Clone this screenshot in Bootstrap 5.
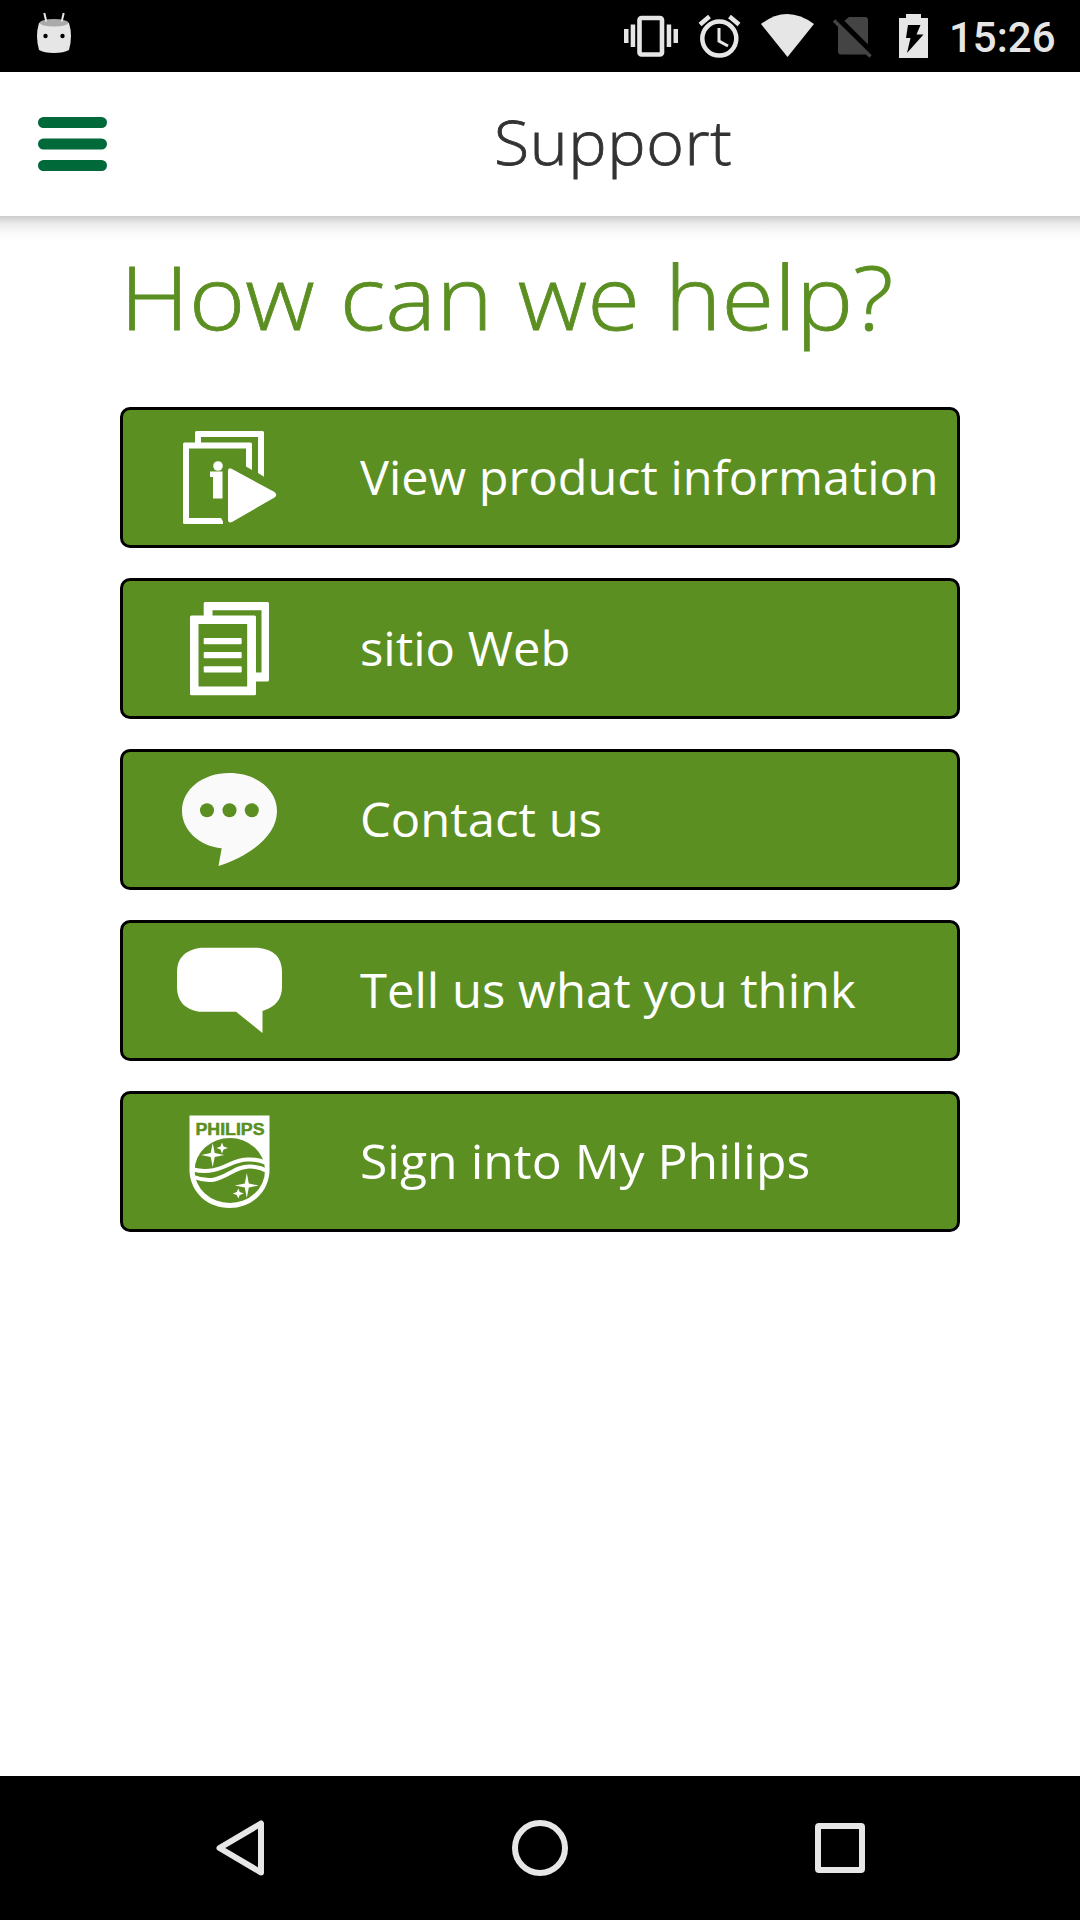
<!DOCTYPE html>
<html lang="en">
<head>
<meta charset="utf-8">
<meta name="viewport" content="width=device-width, initial-scale=1">
<title>Support</title>
<link rel="stylesheet" href="https://cdn.jsdelivr.net/npm/bootstrap@5.3.0/dist/css/bootstrap.min.css">
<style>
body{font-family:"Open Sans","Noto Sans",sans-serif;background:#fff}
.screen{width:1080px;height:1920px}
.status-bar{height:72px}
.status-bar svg,.soft-keys svg{display:block;flex:none}
.clock{font:500 42px/72px Roboto,sans-serif;color:#e6e6e6;width:132px;padding-left:9px;height:72px;padding-top:2px}
.app-bar{height:144px;padding-left:37.500px}
.app-title{font-weight:300;font-size:61px;line-height:84px;color:#333;letter-spacing:.6px;margin-left:386px;padding-bottom:4px;transform:scaleX(1.055);transform-origin:0 50%;-webkit-text-stroke:.8px #333}
.bar-shadow{height:24px;background:linear-gradient(#ccc,#e9e9e9 30%,#fafafa 70%,#fff)}
.support{padding:0 120px}
.headline{font-weight:300;font-size:88px;line-height:112px;color:#5b8f22;margin:0 0 55px 0;white-space:nowrap;transform:scaleX(1.091);transform-origin:0 50%;-webkit-text-stroke:.8px #5b8f22}
.support-list{gap:30px}
.support-btn,.support-btn:hover{height:141px;background:#5b8f22;border:3px solid #000;border-radius:10px;color:#fff;padding:0 0 0 47px;white-space:nowrap;font-size:47px;line-height:64px}
.support-btn svg{flex:none;width:120px;height:94px;margin-right:70px}
.support-btn span{padding-bottom:1px;transform:scaleX(1.042);transform-origin:0 50%}
.support-btn .product-info{transform:scaleX(1.034)}
.support-btn .signin{transform:scaleX(1.062)}
.soft-keys{height:144px}
</style>
</head>
<body>
<div class="screen d-flex flex-column overflow-hidden">
  <div class="status-bar bg-black d-flex justify-content-between flex-shrink-0">
    <svg width="90" height="72" viewBox="0 0 90 72"><path d="M39 23q15-3 30 0q4 13 0 27q-5 3-15 3t-15-3q-4-14 0-27z" fill="#e6e6e6"/><ellipse cx="54" cy="22.800" rx="14.500" ry="3.700" fill="#aaa"/><path d="M44.300 13l2 8.500M63.700 13l-2 8.500" stroke="#e6e6e6" stroke-width="2"/><circle cx="45.500" cy="36" r="2.200"/><circle cx="62.500" cy="36" r="2.200"/></svg>
    <div class="d-flex">
      <svg width="70" height="72" viewBox="620 0 70 72"><rect x="639.500" y="18" width="22.500" height="36.500" rx="2" fill="none" stroke="#e6e6e6" stroke-width="4.600"/><path d="M624 29h4.500v14H624zM630.700 24.500h4.500V47h-4.500zM666.700 24.500h4.500V47h-4.500zM673.500 29h4.500v14h-4.500z" fill="#e6e6e6"/></svg>
      <svg width="60" height="72" viewBox="690 0 60 72" fill="none" stroke="#e6e6e6"><circle cx="719.300" cy="38.600" r="17" stroke-width="4.500"/><path d="M719 28v13l9 5" stroke-width="3"/><path d="M700 24.500l9.500-8M739 24.500l-9.500-8" stroke-width="4.500"/></svg>
      <svg width="75" height="72" viewBox="750 0 75 72"><path d="M761 24q26-20 53 0L787.500 57z" fill="#e6e6e6"/></svg>
      <svg width="65" height="72" viewBox="825 0 65 72"><path d="M849 17h16q3 0 3 3v32q0 2.500-3 2.500h-24q-3 0-3-3V26z" fill="#444"/><path d="M835.500 17.500l37 37" stroke="#000" stroke-width="8"/><path d="M834 20.500l36.500 36" stroke="#444" stroke-width="3.500"/></svg>
      <svg width="50" height="72" viewBox="890 0 50 72"><path d="M899 18h7v-4h15v4h7v40h-29z" fill="#e6e6e6"/><path d="M908 25h12.500l-4 9.500h7L907 53l3.500-15H906z"/></svg>
      <div class="clock me-2">15:26</div>
    </div>
  </div>
  <header class="app-bar bg-white d-flex align-items-center flex-shrink-0">
    <svg width="70" height="54" viewBox="0 0 70 54" fill="#00693a"><rect width="69" height="11" rx="5.500"/><rect y="21.500" width="69" height="11" rx="5.500"/><rect y="43" width="69" height="11" rx="5.500"/></svg>
    <h1 class="app-title mb-0">Support</h1>
  </header>
  <div class="bar-shadow flex-shrink-0"></div>
  <main class="support flex-grow-1">
    <h2 class="headline">How can we help?</h2>
    <div class="support-list d-grid">
      <button class="btn support-btn d-flex align-items-center"><svg viewBox="0 0 120 94" fill="#fff"><path d="M25 12V1.500Q25 0 26.500 0H92.500Q94 0 94 1.500V45.700L88 42V6H31v6zM13 13q0-1.500 1.500-1.500H80.500Q82 11.500 82 13V39l-6-3.500V17.500H19V87H51q2 2 2 6H14.500Q13 93 13 91.500z"/><circle cx="48" cy="35" r="4.800"/><path d="M40 40.500h12.500v27h-9.500V46h-3zM58 40q0-4 3.500-2.300L104.500 61q3.500 3 0 5.500L62 91q-4 1.500-4-2.500z"/></svg><span class="product-info">View product information</span></button>
      <button class="btn support-btn d-flex align-items-center"><svg viewBox="0 0 120 94" fill="#fff"><path fill-rule="evenodd" d="M33.700 13.500V1.500Q33.700 0 35 0H97.500Q99 0 99 1.500V78q0 1.500-1.500 1.500H86V92q0 1.300-1.500 1.300h-63Q20 93.300 20 92V15q0-1.500 1.500-1.500zM42.500 13.500H84.500q1.500 0 1.500 1.500V70.500h5.500V8.200h-49zM28.500 22V84.500H77.200V22z"/><rect x="33.700" y="36" width="38" height="6.300" rx="1"/><rect x="33.700" y="50" width="38" height="6.300" rx="1"/><rect x="33.700" y="64.300" width="38" height="6.300" rx="1"/></svg><span>sitio Web</span></button>
      <button class="btn support-btn d-flex align-items-center"><svg viewBox="0 0 120 94"><path d="M59.500 0C86 0 107 16 107 38C107 62 82 82 48.500 93L51.700 75.300C29 73 12 57 12 38C12 16 33 0 59.500 0z" fill="#fafafa"/><g fill="#5b8f22"><circle cx="37" cy="37.300" r="7"/><circle cx="59.500" cy="37.300" r="7"/><circle cx="81.800" cy="37.300" r="7"/></g></svg><span>Contact us</span></button>
      <button class="btn support-btn d-flex align-items-center"><svg viewBox="0 0 120 94" fill="#fff"><path d="M31 3.700H88Q112 6 112 28V43Q112 61 92.500 67V89L66 67.700H29Q7 64 7 43V28Q7 7 31 3.700z"/></svg><span>Tell us what you think</span></button>
      <button class="btn support-btn d-flex align-items-center"><svg viewBox="0 0 120 94"><path d="M19.500 .5H99.500V57C98 78 81 93 59.500 93S21 78 19.500 57z" fill="#fff"/><text x="25.500" y="20" textLength="69" lengthAdjust="spacingAndGlyphs" font-family="Liberation Sans, sans-serif" font-weight="700" font-size="16" fill="#5b8f22" stroke="#5b8f22" stroke-width=".5">PHILIPS</text><ellipse cx="59.800" cy="55.500" rx="35.200" ry="32.500" fill="#5b8f22"/><g fill="none" stroke="#fff" stroke-width="4"><path d="M23 54.500C50 61 60 44 78 44.500Q88 44 96 48"/><path d="M24 62C52 73 60 51 80 51.500Q90 52 97 56"/></g><path d="M42.700 28l2 10 9.500 2-9.500 2-2 10-2-10-9.500-2 9.500-2zM76.800 58l2 10.500 10 2-10 2-2 10.500-2-10.500-10-2 10-2zM52 27.500l1.500 4 4.500 1.500-4.500 1.500-1.500 4-1.500-4-4-1.500 4-1.500zM68.300 73.500l1.500 3.500 4 1.500-4 1.500-1.500 3.500-1.500-3.500-4-1.500 4-1.500z" fill="#fff"/></svg><span class="signin">Sign into My Philips</span></button>
    </div>
  </main>
  <nav class="soft-keys bg-black flex-shrink-0 d-flex justify-content-center align-items-center">
    <svg width="300" height="144" viewBox="90 0 300 144"><path d="M261 47.500v49L219.500 72z" fill="none" stroke="#e6e6e6" stroke-width="6" stroke-linejoin="round"/></svg>
    <svg width="300" height="144" viewBox="390 0 300 144"><circle cx="540" cy="72" r="25" fill="none" stroke="#e6e6e6" stroke-width="6"/></svg>
    <svg width="300" height="144" viewBox="690 0 300 144"><rect x="818" y="50" width="44" height="44" rx="1" fill="none" stroke="#e6e6e6" stroke-width="6"/></svg>
  </nav>
</div>
<script src="https://cdn.jsdelivr.net/npm/bootstrap@5.3.0/dist/js/bootstrap.bundle.min.js"></script>
</body>
</html>
